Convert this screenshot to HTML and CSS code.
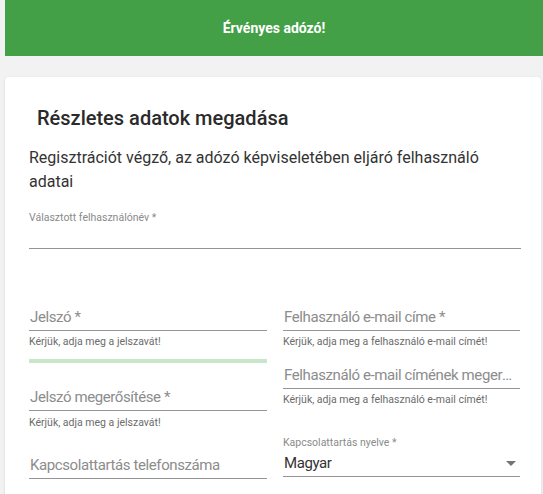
FILE: index.html
```html
<!DOCTYPE html>
<html lang="hu">
<head>
    <meta charset="UTF-8">
    <meta name="viewport" content="width=device-width, initial-scale=1.0">
    <title>Regisztráció - Részletes adatok</title>
    <link rel="stylesheet" href="styles.css">
</head>
<body>

    <!-- Status banner -->
    <div class="banner">Érvényes adózó!</div>

    <div class="card">
        <h2 class="card-title">Részletes adatok megadása</h2>
        <p class="card-subtitle">Regisztrációt végző, az adózó képviseletében eljáró felhasználó adatai</p>

        <!-- Username -->
        <div class="field field-username">
            <div class="float-label">Választott felhasználónév *</div>
            <div class="control"><span class="value"></span></div>
        </div>

        <div class="columns">
            <div class="column">
                <div class="field">
                    <div class="control"><span class="placeholder">Jelszó *</span></div>
                    <div class="hint">Kérjük, adja meg a jelszavát!</div>
                </div>
                <div class="strength"></div>
                <div class="field field-confirm">
                    <div class="control"><span class="placeholder">Jelszó megerősítése *</span></div>
                    <div class="hint">Kérjük, adja meg a jelszavát!</div>
                </div>
                <div class="field field-phone">
                    <div class="control"><span class="placeholder">Kapcsolattartás telefonszáma</span></div>
                </div>
            </div>

            <div class="column">
                <div class="field">
                    <div class="control"><span class="placeholder">Felhasználó e-mail címe *</span></div>
                    <div class="hint">Kérjük, adja meg a felhasználó e-mail címét!</div>
                </div>
                <div class="field field-email2">
                    <div class="control"><span class="placeholder">Felhasználó e-mail címének megerősítése *</span></div>
                    <div class="hint">Kérjük, adja meg a felhasználó e-mail címét!</div>
                </div>
                <div class="field field-select">
                    <div class="float-label">Kapcsolattartás nyelve *</div>
                    <div class="control">
                        <span class="value">Magyar</span>
                        <span class="arrow"></span>
                    </div>
                </div>
            </div>
        </div>
    </div>

</body>
</html>
```

FILE: styles.css
```css
/* General Styles */
body {
    font-family: Roboto, "Noto Sans", Arial, sans-serif;
    margin: 0;
    padding: 0 0 0 5px;
    background-color: #f2f2f2;
    color: #212121;
    overflow: hidden;
}

.banner {
    height: 56px;
    line-height: 56px;
    background-color: #43a047;
    color: #fff;
    font-size: 14px;
    font-weight: 700;
    text-align: center;
}

.card {
    margin: 21px 2px 0 0;
    padding: 29px 20px 40px 24px;
    background-color: #fff;
    border-radius: 4px;
    box-shadow: 0 1px 3px rgba(0, 0, 0, 0.12);
}

.card-title {
    margin: 0 0 16px 8px;
    font-size: 20px;
    font-weight: 500;
    line-height: 24px;
    color: #2a2a2a;
}

.card-subtitle {
    margin: 0 0 17px 0;
    font-size: 16px;
    line-height: 24px;
    color: #333;
}

/* Form fields */
.field {
    min-width: 0;
}

.float-label {
    font-size: 10.5px;
    line-height: 14px;
    color: #8a8a8a;
}

.control {
    position: relative;
    height: 20px;
    padding-bottom: 3px;
    border-bottom: 1px solid #949494;
    font-size: 15px;
    line-height: 20px;
    letter-spacing: -0.4px;
}

.placeholder {
    display: block;
    padding-left: 1px;
    color: #8c8c8c;
    white-space: nowrap;
    overflow: hidden;
    text-overflow: ellipsis;
}

.value {
    padding-left: 1px;
    color: #333;
}

.hint {
    margin-top: 4px;
    font-size: 10.5px;
    line-height: 14px;
    color: #6b6b6b;
    white-space: nowrap;
}

.field-username .control {
    margin-top: 1px;
    padding-bottom: 2px;
}

.columns {
    display: grid;
    grid-template-columns: 238px 237px;
    column-gap: 16px;
    margin-top: 58px;
}

.column {
    display: flex;
    flex-direction: column;
    min-width: 0;
}

.strength {
    height: 4px;
    margin-top: 10px;
    background-color: #c8e6c9;
}

.field-confirm {
    margin-top: 24px;
}

.field-confirm .hint {
    margin-top: 5px;
}

.field-phone {
    margin-top: 25px;
}

.field-email2 {
    margin-top: 16px;
}

.field-select {
    margin-top: 29px;
}

.field-select .float-label {
    margin-bottom: 3px;
}

.arrow {
    position: absolute;
    right: 4px;
    top: 8px;
    width: 0;
    height: 0;
    border-left: 5px solid transparent;
    border-right: 5px solid transparent;
    border-top: 5px solid #757575;
}
```
